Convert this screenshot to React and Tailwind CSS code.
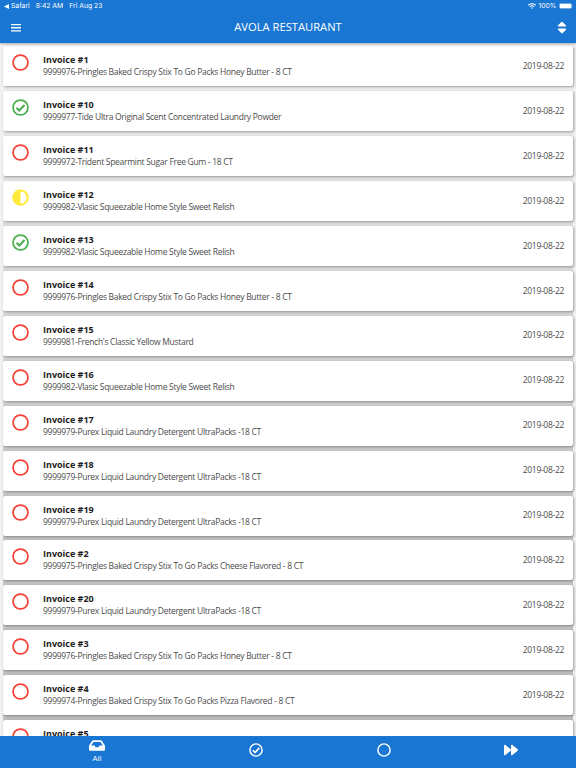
import React from "react";
import { FaAdjust, FaInbox, FaForward, FaSort, FaWifi } from "react-icons/fa";

const invoices = [
  { id: 1, date: "2019-08-22", item: "9999976-Pringles Baked Crispy Stix To Go Packs Honey Butter - 8 CT", status: "open" },
  { id: 10, date: "2019-08-22", item: "9999977-Tide Ultra Original Scent Concentrated Laundry Powder", status: "done" },
  { id: 11, date: "2019-08-22", item: "9999972-Trident Spearmint Sugar Free Gum - 18 CT", status: "open" },
  { id: 12, date: "2019-08-22", item: "9999982-Vlasic Squeezable Home Style Sweet Relish", status: "partial" },
  { id: 13, date: "2019-08-22", item: "9999982-Vlasic Squeezable Home Style Sweet Relish", status: "done" },
  { id: 14, date: "2019-08-22", item: "9999976-Pringles Baked Crispy Stix To Go Packs Honey Butter - 8 CT", status: "open" },
  { id: 15, date: "2019-08-22", item: "9999981-French's Classic Yellow Mustard", status: "open" },
  { id: 16, date: "2019-08-22", item: "9999982-Vlasic Squeezable Home Style Sweet Relish", status: "open" },
  { id: 17, date: "2019-08-22", item: "9999979-Purex Liquid Laundry Detergent UltraPacks -18 CT", status: "open" },
  { id: 18, date: "2019-08-22", item: "9999979-Purex Liquid Laundry Detergent UltraPacks -18 CT", status: "open" },
  { id: 19, date: "2019-08-22", item: "9999979-Purex Liquid Laundry Detergent UltraPacks -18 CT", status: "open" },
  { id: 2, date: "2019-08-22", item: "9999975-Pringles Baked Crispy Stix To Go Packs Cheese Flavored - 8 CT", status: "open" },
  { id: 20, date: "2019-08-22", item: "9999979-Purex Liquid Laundry Detergent UltraPacks -18 CT", status: "open" },
  { id: 3, date: "2019-08-22", item: "9999976-Pringles Baked Crispy Stix To Go Packs Honey Butter - 8 CT", status: "open" },
  { id: 4, date: "2019-08-22", item: "9999974-Pringles Baked Crispy Stix To Go Packs Pizza Flavored - 8 CT", status: "open" },
  { id: 5, status: "open" },
];

// Strip behind each card, getting darker down the list
const gapColors = [
  "bg-[#f0f0f0]", "bg-[#ececec]", "bg-[#e7e7e7]", "bg-[#e2e2e2]",
  "bg-[#dedede]", "bg-[#dadada]", "bg-[#d6d6d6]", "bg-[#d2d2d2]",
  "bg-[#cecece]", "bg-[#cbcbcb]", "bg-[#c9c9c9]", "bg-[#c7c7c7]",
  "bg-[#c5c5c5]", "bg-[#c4c4c4]", "bg-[#c2c2c2]", "bg-[#c2c2c2]",
];

function Circle({ checked, className }) {
  return (
    <svg viewBox="0 0 24 24" className={className} fill="none" stroke="currentColor" strokeWidth="2.5">
      <circle cx="12" cy="12" r="10.5" />
      {checked && <path d="m6.4 12.4 3.9 3.9 7.4-7.9" strokeWidth="2.9" />}
    </svg>
  );
}

function StatusIcon({ status }) {
  if (status === "done") return <Circle checked className="size-[17px] text-[#4caf50]" />;
  if (status === "partial") return <FaAdjust className="size-[17px] text-[#ffeb3b]" />;
  return <Circle className="size-[17px] text-[#f44336]" />;
}

function InvoiceRow({ invoice, gap }) {
  return (
    <div className={`ml-[2.5px] mr-[3px] h-[44.93px] shrink-0 ${gap}`}>
      <div className="flex h-[40px] rounded-[2px] bg-white pr-[9px] pl-[9px] shadow-[1px_1px_3px_rgba(0,0,0,0.36)]">
        <div className="w-[31.5px] shrink-0 pt-[8px]">
          <StatusIcon status={invoice.status} />
        </div>
        <div className="flex-1 pt-[8px]">
          <h2 className="text-[9px] leading-[12px] font-bold text-[#1c1c1c]">Invoice #{invoice.id}</h2>
          {invoice.item && (
            <p className="text-[8.5px] leading-[11px] tracking-[-0.29px] text-[#4c4c4c]">{invoice.item}</p>
          )}
        </div>
        {invoice.date && (
          <span className="self-center text-[8.5px] tracking-[-0.31px] text-[#4c4c4c]">{invoice.date}</span>
        )}
      </div>
    </div>
  );
}

function App() {
  return (
    <div className="flex h-[768px] w-[576px] flex-col overflow-hidden bg-[#f2f2f2] font-['Open_Sans',sans-serif]">
      <header className="z-10 h-[43px] shrink-0 bg-[#1976d2] text-white shadow-[0_1px_2px_rgba(0,0,0,0.3)]">
        {/* Status bar */}
        <div className="flex h-[12px] items-center justify-between pr-[3px] pl-[4px] font-[Inter,sans-serif] text-[6.8px]">
          <div className="flex items-center gap-[6px]">
            <span className="flex items-center gap-[2px]">
              <svg viewBox="0 0 5 5" className="size-[5px]" fill="currentColor"><path d="M0 2.5 5 0v5z" /></svg>
              Safari
            </span>
            <span>8:42 AM</span>
            <span>Fri Aug 23</span>
          </div>
          <div className="flex items-center gap-[2.5px]">
            <FaWifi className="size-[8px]" />
            <span>100%</span>
            <svg viewBox="0 0 14 6" className="h-[6px] w-[14px]">
              <rect x=".25" y=".25" width="12.5" height="5.5" rx="1.5" fill="none" stroke="white" strokeWidth=".5" opacity=".5" />
              <rect x=".7" y=".7" width="11.6" height="4.6" rx="1" fill="white" />
              <path d="M13.2 2v2q.8-1 0-2" fill="white" opacity=".6" />
            </svg>
          </div>
        </div>
        {/* Toolbar */}
        <div className="grid h-[31px] grid-cols-[1fr_auto_1fr] items-center px-[9px]">
          <svg viewBox="0 0 10 8" className="ml-[2px] h-[8px] w-[10px]" fill="currentColor">
            <path d="M0 0h10v1.3H0zM0 3.1h10v1.3H0zM0 6.2h10v1.3H0z" />
          </svg>
          <h1 className="text-[11.2px]">AVOLA RESTAURANT</h1>
          <FaSort className="-mr-px h-[15px] w-[12px] justify-self-end" />
        </div>
      </header>

      <main className="flex min-h-0 flex-1 flex-col overflow-hidden pt-[3.3px]">
        {invoices.map((invoice, i) => (
          <InvoiceRow key={invoice.id} invoice={invoice} gap={gapColors[i]} />
        ))}
      </main>

      <nav className="z-10 flex h-[32px] shrink-0 items-center bg-[#1976d2] text-white">
        <div className="flex w-[194px] flex-col items-center pb-[3px]">
          <FaInbox className="h-[15px] w-[16px]" />
          <span className="text-[8px] leading-[10px]">All</span>
        </div>
        <div className="flex w-[124px] justify-center pb-[4px]"><Circle checked className="size-[14px]" /></div>
        <div className="flex w-[132px] justify-center pb-[4px]"><Circle className="size-[14px]" /></div>
        <div className="flex w-[122px] justify-center pb-[4px]"><FaForward className="size-[14px]" /></div>
      </nav>
    </div>
  );
}

export default App;
